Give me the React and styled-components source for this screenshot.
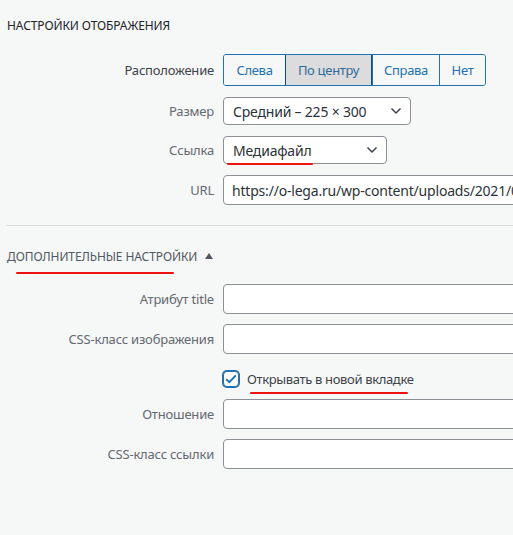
import React from "react";
import styled, { createGlobalStyle } from "styled-components";

const GlobalStyle = createGlobalStyle`
  html, body {
    margin: 0;
    padding: 0;
    background: #f6f7f7;
    overflow: hidden;
  }
  body {
    font-family: "Noto Sans", "Open Sans", sans-serif;
    color: #3c434a;
  }
`;

const Panel = styled.div`
  width: 560px;
  min-height: 535px;
  padding-top: 17px;
`;

const SectionTitle = styled.h2`
  display: flex;
  align-items: center;
  gap: 8px;
  margin: 0 0 0 7px;
  font-size: 12px;
  font-weight: 400;
  text-transform: uppercase;
  letter-spacing: -0.1px;
  color: ${(p) => p.$color || "#1d2327"};
  height: 16px;
`;

const Caret = styled.span`
  width: 0;
  height: 0;
  border-left: 4px solid transparent;
  border-right: 4px solid transparent;
  border-bottom: 6px solid #50575e;
  margin-top: -1px;
`;

const Form = styled.div`
  display: grid;
  grid-template-columns: 207px 1fr;
  column-gap: 9px;
  row-gap: ${(p) => p.$gap || "10px"};
  padding-left: 7px;
  margin-top: ${(p) => p.$top || "0"};
  align-items: center;
`;

const Label = styled.label`
  text-align: right;
  font-size: 13px;
  color: ${(p) => (p.$dark ? "#3c434a" : "#646970")};
  white-space: nowrap;
  letter-spacing: -0.2px;
`;

const ButtonGroup = styled.div`
  display: inline-flex;
  border: 1px solid #2271b1;
  border-radius: 3px;
  overflow: hidden;
  width: max-content;
  height: 30px;
`;

const GroupButton = styled.button`
  box-sizing: border-box;
  width: ${(p) => p.$width}px;
  font-family: inherit;
  font-size: 13px;
  letter-spacing: -0.3px;
  color: ${(p) => (p.$pressed ? "#2e6a9a" : "#2271b1")};
  background: ${(p) => (p.$pressed ? "#dcdcde" : "#f6f7f7")};
  border: none;
  border-left: 1px solid ${(p) => (p.$pressed ? "#0a4b78" : "#2271b1")};
  ${(p) => p.$first && "border-left: none;"}
  ${(p) => p.$pressed && "border-right: 1px solid #0a4b78;"}
  padding: 0;
  height: 100%;
`;

const SelectBox = styled.div`
  display: flex;
  align-items: center;
  width: ${(p) => p.$width}px;
  height: 28px;
  box-sizing: border-box;
  background: #fff;
  border: 1px solid #8c8f94;
  border-radius: 4px;
  padding: 0 8px 0 9px;
  font-size: 14px;
  color: #2c3338;
  letter-spacing: -0.2px;
`;

const SelectValue = styled.span`
  flex: 1;
  white-space: nowrap;
`;

const Chevron = () => (
  <svg width="12" height="8" viewBox="0 0 12 8" fill="none">
    <path d="M1.5 1.5 L6 6 L10.5 1.5" stroke="#3c434a" strokeWidth="1.5" />
  </svg>
);

const TextInput = styled.input`
  box-sizing: border-box;
  width: 320px;
  height: 30px;
  border: 1px solid #8c8f94;
  border-radius: 4px;
  background: #fff;
  font-family: inherit;
  font-size: 14px;
  color: #2c3338;
  letter-spacing: -0.2px;
  padding: 0 8px;
  outline: none;
`;

const Divider = styled.hr`
  border: none;
  border-top: 1px solid #dcdcde;
  margin: 20px 0 0 6px;
`;

const Marked = styled.span`
  position: relative;
  &::after {
    content: "";
    position: absolute;
    left: ${(p) => p.$left || 0}px;
    right: ${(p) => p.$right || 0}px;
    bottom: ${(p) => p.$bottom || -6}px;
    height: 2px;
    border-radius: 2px;
    background: #ee1111;
  }
`;

const CheckRow = styled.label`
  grid-column: 2;
  display: flex;
  align-items: center;
  gap: 8px;
  font-size: 13px;
  color: #3c434a;
  letter-spacing: -0.35px;
  height: 18px;
  margin: 6px 0 1px;
`;

const CheckBox = styled.span`
  display: flex;
  align-items: center;
  justify-content: center;
  width: 16px;
  height: 16px;
  box-sizing: border-box;
  border: 1.5px solid #2271b1;
  box-shadow: 0 0 0 1px #2271b1;
  border-radius: 4px;
  background: #fff;
`;

const WideRow = styled.div`
  grid-column: 1 / span 2;
  margin-bottom: 10px;
`;

export default function App() {
  return (
    <>
      <GlobalStyle />
      <Panel>
        <SectionTitle>Настройки отображения</SectionTitle>
        <Form $top="21px" $gap="11px">
          <Label $dark>Расположение</Label>
          <ButtonGroup>
            <GroupButton $first $width={61}>Слева</GroupButton>
            <GroupButton $pressed $width={87}>По центру</GroupButton>
            <GroupButton $width={67}>Справа</GroupButton>
            <GroupButton $width={46}>Нет</GroupButton>
          </ButtonGroup>
          <Label>Размер</Label>
          <SelectBox $width={188}>
            <SelectValue>Средний – 225 × 300</SelectValue>
            <Chevron />
          </SelectBox>
          <Label>Ссылка</Label>
          <SelectBox $width={164}>
            <SelectValue>
              <Marked $left={-6} $right={-2} $bottom={-5}>Медиафайл</Marked>
            </SelectValue>
            <Chevron />
          </SelectBox>
          <Label>URL</Label>
          <TextInput
            readOnly
            defaultValue="https://o-lega.ru/wp-content/uploads/2021/08/2021-08-25_12-00-00.png"
          />
        </Form>
        <Divider />
        <Form $top="22px" $gap="10px">
          <WideRow>
            <SectionTitle $color="#50575e" style={{ margin: 0 }}>
              <Marked $left={9} $right={23} $bottom={-9}>Дополнительные настройки</Marked>
              <Caret />
            </SectionTitle>
          </WideRow>
          <Label>Атрибут title</Label>
          <TextInput />
          <Label>CSS-класс изображения</Label>
          <TextInput />
          <CheckRow>
            <CheckBox>
              <svg width="12" height="10" viewBox="0 0 12 10" fill="none">
                <path d="M1.2 5.2 L4.4 8.2 L10.8 1.4" stroke="#2271b1" strokeWidth="2" />
              </svg>
            </CheckBox>
            <Marked $left={3} $right={6} $bottom={-6}>Открывать в новой вкладке</Marked>
          </CheckRow>
          <Label>Отношение</Label>
          <TextInput />
          <Label>CSS-класс ссылки</Label>
          <TextInput />
        </Form>
      </Panel>
    </>
  );
}
